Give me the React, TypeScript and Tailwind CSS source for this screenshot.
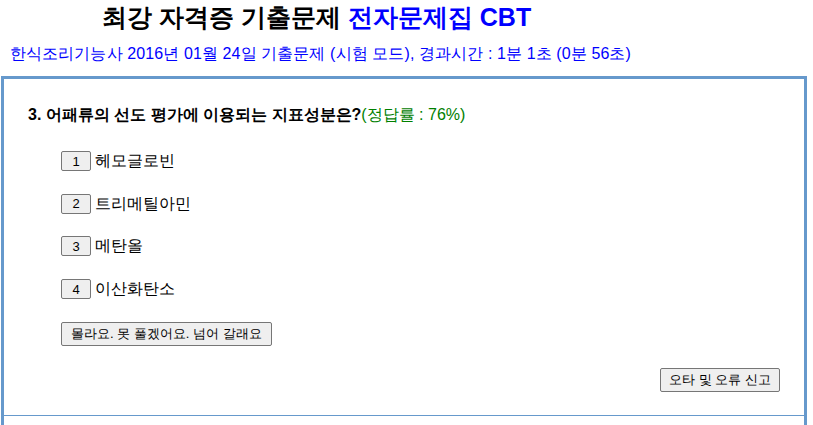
import React from "react";

const font = { fontFamily: '"Liberation Sans", sans-serif' };

function Btn({ children, className = "" }: { children: React.ReactNode; className?: string }) {
  return (
    <button
      className={
        "border border-[#767676] bg-[#efefef] rounded-[2px] text-[13px] leading-none text-black " +
        className
      }
      style={font}
    >
      {children}
    </button>
  );
}

export default function App() {
  const options = ["헤모글로빈", "트리메틸아민", "메탄올", "이산화탄소"];
  return (
    <div className="w-[813px] h-[425px] overflow-hidden bg-white" style={font}>
      <div className="pl-[102px] pt-[1px] h-[36px] text-[25px] font-bold leading-[32px]">
        <span className="text-black">최강 자격증 기출문제 </span>
        <span className="text-[#0000ff]">전자문제집 CBT</span>
      </div>
      <div className="pl-[10px] h-[40px] text-[16px] leading-[36px] text-[#0000ff] tracking-[0.1px]">
        한식조리기능사 2016년 01월 24일 기출문제 (시험 모드), 경과시간 : 1분 1초 (0분 56초)
      </div>
      <div className="ml-[1px] w-[806px] h-[400px] border-[3px] border-[#6699cc] border-b-0">
        <div className="h-[336px] pt-[24px] pl-[24px] pr-[24px]">
          <div className="text-[16px] leading-[24px] text-black">
            <span className="font-bold">3. 어패류의 선도 평가에 이용되는 지표성분은?</span>
            <span className="text-[#008000]">(정답률 : 76%)</span>
          </div>
          <div className="pl-[33px] pt-[24px] flex flex-col gap-[22.7px]">
            {options.map((o, i) => (
              <div key={i} className="flex items-center h-[20px]">
                <Btn className="w-[30px] h-[20px]">{i + 1}</Btn>
                <span className="ml-[4px] text-[16px] text-black">{o}</span>
              </div>
            ))}
            <div className="h-[24px] flex items-center">
              <Btn className="h-[24px] px-[9px]">몰라요. 못 풀겠어요. 넘어 갈래요</Btn>
            </div>
          </div>
          <div className="flex justify-end mt-[22px]">
            <Btn className="h-[24px] px-[8px]">오타 및 오류 신고</Btn>
          </div>
        </div>
        <div className="border-t border-[#6699cc]" />
      </div>
    </div>
  );
}
